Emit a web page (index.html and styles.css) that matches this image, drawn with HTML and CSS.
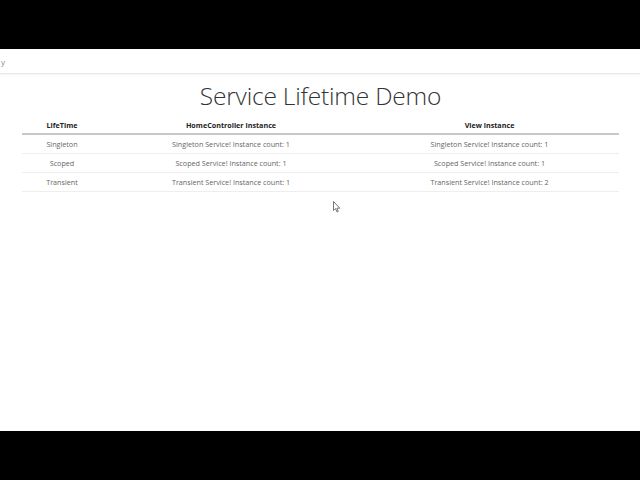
FILE: index.html
```html
<!DOCTYPE html>
<html>
<head>
<meta charset="utf-8">
<link rel="stylesheet" href="styles.css">
</head>
<body>
<div class="bar"></div>
<div class="screen">
  <div class="nav"><span class="crumb">y</span></div>
  <main class="content">
    <h1 class="title">Service Lifetime Demo</h1>
    <table class="grid">
      <thead>
        <tr><th class="c1">LifeTime</th><th class="c2">HomeController instance</th><th class="c3">View instance</th></tr>
      </thead>
      <tbody>
        <tr><td>Singleton</td><td>Singleton Service! Instance count: 1</td><td>Singleton Service! Instance count: 1</td></tr>
        <tr><td>Scoped</td><td>Scoped Service! Instance count: 1</td><td>Scoped Service! Instance count: 1</td></tr>
        <tr><td>Transient</td><td>Transient Service! Instance count: 1</td><td>Transient Service! Instance count: 2</td></tr>
      </tbody>
    </table>
  </main>
  <svg class="cursor" width="8" height="12" viewBox="0 0 8 12"><path d="M0.5 0.5 L0.5 9.5 L2.6 7.6 L4 11 L5.3 10.4 L3.9 7.2 L6.8 7.2 Z" fill="#fff" stroke="#555" stroke-width="0.8"/></svg>
</div>
<div class="bar"></div>
</body>
</html>
```
FILE: styles.css
```css
html, body { margin: 0; padding: 0; }
body { width: 640px; height: 480px; background: #000; display: flex; flex-direction: column; font-family: "Open Sans", "Liberation Sans", sans-serif; color: #333; overflow: hidden; }
.bar { height: 49px; background: #000; flex: none; }
.screen { flex: 1; background: #fff; position: relative; display: flex; flex-direction: column; }
.nav { height: 24px; border-bottom: 1px solid #e6e6e6; box-shadow: 0 1px 3px rgba(0,0,0,0.05); display: flex; align-items: center; }
.crumb { font-size: 8px; color: #888; margin-left: 1px; }
.content { padding: 0 21px 0 22px; }
.title { font-family: "Open Sans", sans-serif; font-weight: 300; font-size: 24.5px; text-align: center; margin: 5px 0 3px; line-height: 34px; color: #333; letter-spacing: -0.2px; }
.grid { width: 100%; border-collapse: collapse; font-size: 7.2px; }
.grid th { font-weight: 700; color: #222; height: 17px; padding: 0; border-bottom: 2px solid #c8c8c8; }
.grid td { text-align: center; height: 18px; padding: 0; border-bottom: 1px solid #eeeeee; color: #666; }
.c1 { width: 80px; }
.c2 { width: 258px; }
.cursor { position: absolute; left: 333px; top: 152px; }
```
